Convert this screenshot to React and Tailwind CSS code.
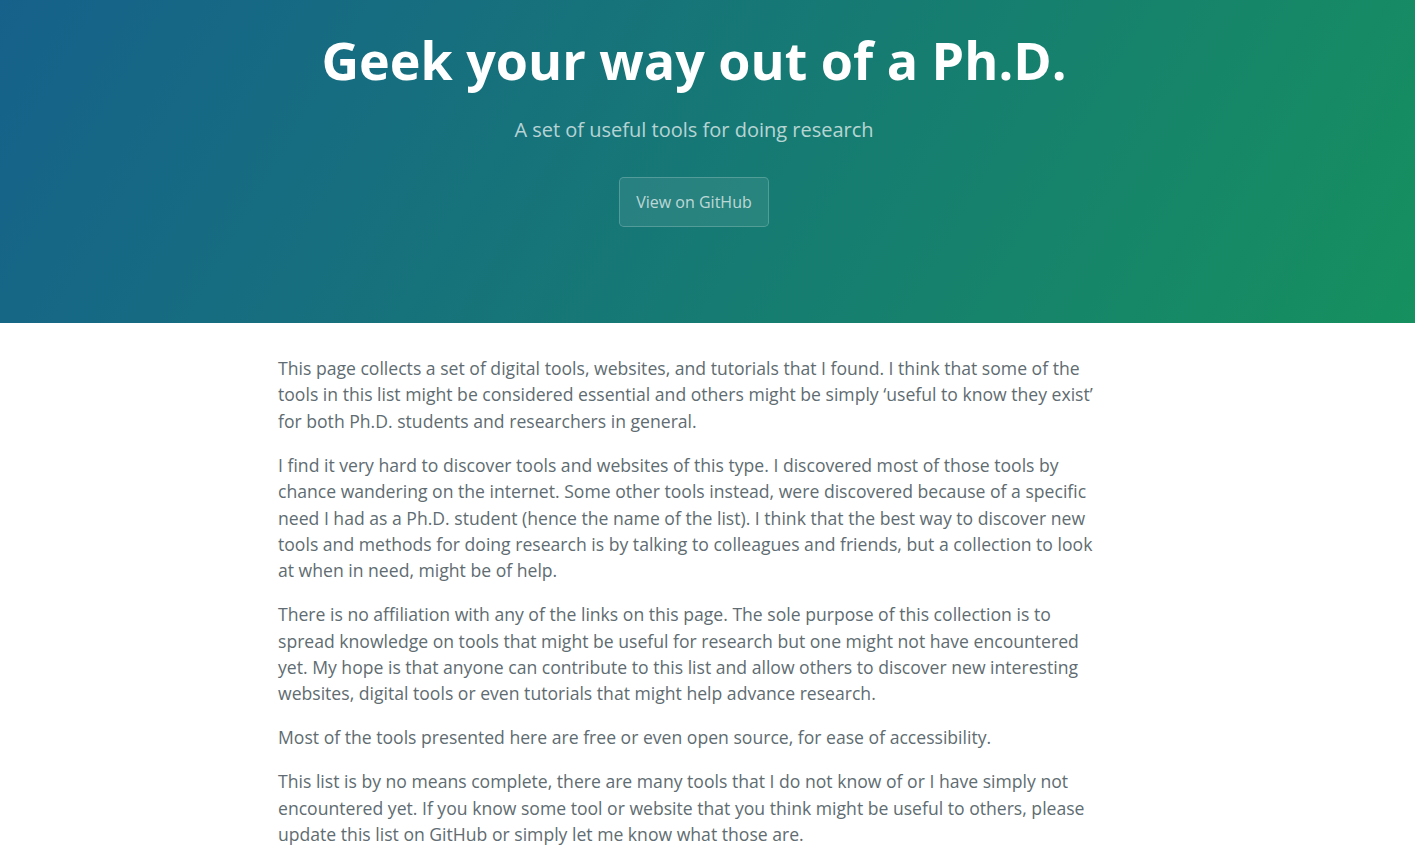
import React from 'react';

const paragraphs = [
  'This page collects a set of digital tools, websites, and tutorials that I found. I think that some of the tools in this list might be considered essential and others might be simply \u2018useful to know they exist\u2019 for both Ph.D. students and researchers in general.',
  'I find it very hard to discover tools and websites of this type. I discovered most of those tools by chance wandering on the internet. Some other tools instead, were discovered because of a specific need I had as a Ph.D. student (hence the name of the list). I think that the best way to discover new tools and methods for doing research is by talking to colleagues and friends, but a collection to look at when in need, might be of help.',
  'There is no affiliation with any of the links on this page. The sole purpose of this collection is to spread knowledge on tools that might be useful for research but one might not have encountered yet. My hope is that anyone can contribute to this list and allow others to discover new interesting websites, digital tools or even tutorials that might help advance research.',
  'Most of the tools presented here are free or even open source, for ease of accessibility.',
  'This list is by no means complete, there are many tools that I do not know of or I have simply not encountered yet. If you know some tool or website that you think might be useful to others, please update this list on GitHub or simply let me know what those are.',
];

const App = () => {
  return (
    <div className="min-h-screen bg-white font-['Open_Sans',sans-serif]">
      <header className="h-[323px] bg-[linear-gradient(120deg,#16618b,#16905f)] text-white">
        <div className="w-[1388px] pt-6 flex flex-col items-center text-center">
          <h1 className="text-[52px] leading-[72px] font-bold">Geek your way out of a Ph.D.</h1>
          <h2 className="mt-[19px] text-[20px] leading-[30px] font-normal text-white/70">
            A set of useful tools for doing research
          </h2>
          <a
            href="#"
            className="mt-8 px-4 py-3 text-base leading-6 text-white/70 bg-white/[0.08] border border-white/20 rounded-[0.3rem] hover:bg-white/20 transition"
          >
            View on GitHub
          </a>
        </div>
      </header>

      <main className="w-[1388px]">
        <section className="max-w-[1024px] mx-auto px-24 pt-8 pb-8 text-[1.1rem] leading-[1.5] text-[#606c71]">
          {paragraphs.map((text, i) => (
            <p key={i} className="mb-[1em]">
              {text}
            </p>
          ))}
        </section>
      </main>
    </div>
  );
};

export default App;
